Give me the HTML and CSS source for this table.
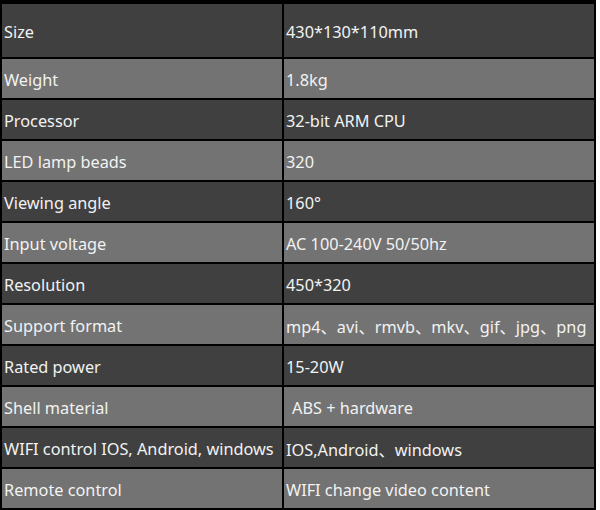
FILE: index.html
```html
<!DOCTYPE html>
<html>
<head>
<meta charset="utf-8">
<link rel="stylesheet" href="styles.css">
</head>
<body>
<div class="spec">
  <div class="cell dark">Size</div><div class="cell dark">430*130*110mm</div>
  <div class="cell light">Weight</div><div class="cell light">1.8kg</div>
  <div class="cell dark">Processor</div><div class="cell dark">32-bit ARM CPU</div>
  <div class="cell light">LED lamp beads</div><div class="cell light">320</div>
  <div class="cell dark">Viewing angle</div><div class="cell dark">160°</div>
  <div class="cell light">Input voltage</div><div class="cell light">AC 100-240V 50/50hz</div>
  <div class="cell dark">Resolution</div><div class="cell dark">450*320</div>
  <div class="cell light">Support format</div><div class="cell light">mp4、avi、rmvb、mkv、gif、jpg、png</div>
  <div class="cell dark">Rated power</div><div class="cell dark">15-20W</div>
  <div class="cell light">Shell material</div><div class="cell light indent">ABS + hardware</div>
  <div class="cell dark">WIFI control IOS, Android, windows</div><div class="cell dark">IOS,Android、windows</div>
  <div class="cell light">Remote control</div><div class="cell light">WIFI change video content</div>
</div>
</body>
</html>
```
FILE: styles.css
```css
html, body {
  margin: 0;
  padding: 0;
  background: #ffffff;
}
.spec {
  width: 596px;
  height: 510px;
  box-sizing: border-box;
  background: #000000;
  padding: 4px 2px 2px 2px;
  display: grid;
  grid-template-columns: 280px 310px;
  grid-template-rows: 53px repeat(11, 39px);
  gap: 2px;
  font-family: "Noto Sans", "Noto Sans CJK SC", sans-serif;
  font-size: 16.3px;
  color: #f2f2f2;
}
.cell {
  display: flex;
  align-items: center;
  padding-left: 2px;
  padding-top: 2px;
  white-space: nowrap;
  overflow: hidden;
}
.dark {
  background: #404040;
}
.light {
  background: #737373;
}
.indent {
  padding-left: 8px;
}
```
